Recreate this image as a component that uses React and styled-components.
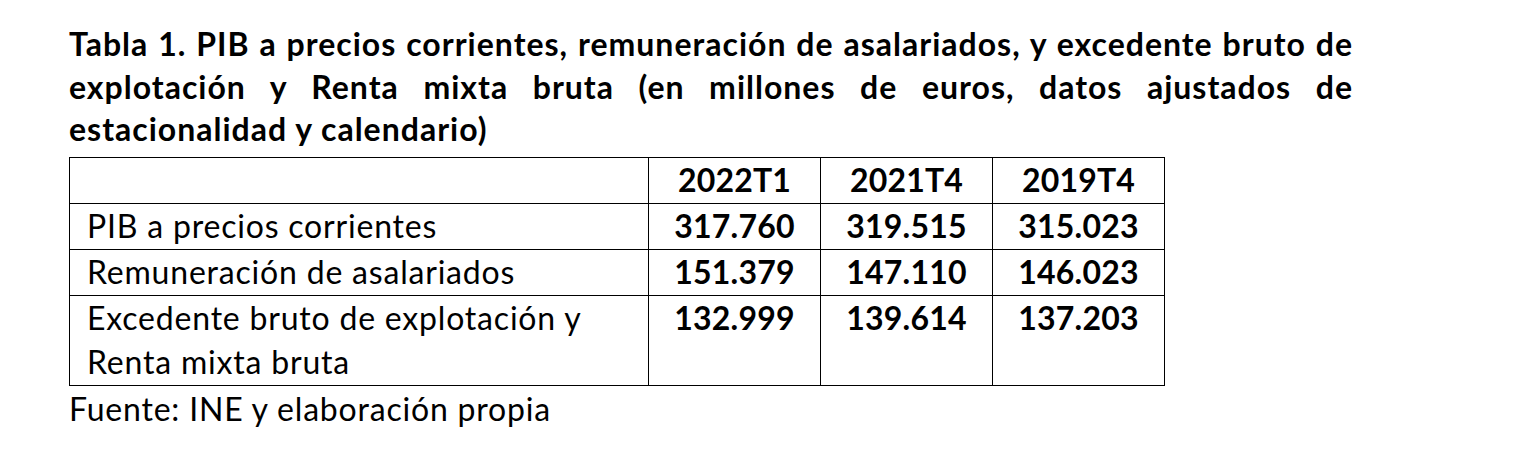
import React from "react";
import styled, { createGlobalStyle } from "styled-components";

const Global = createGlobalStyle`
  html, body { margin: 0; padding: 0; background: #fff; }
  body { font-family: Lato, "Open Sans", sans-serif; color: #000; }
`;

const Page = styled.div`
  padding: 23px 0 0 69px;
  width: 1284px;
`;

const Title = styled.h1`
  margin: 0;
  font-size: 32px;
  font-weight: 700;
  letter-spacing: 1px;
  line-height: 42.5px;
  text-align: justify;
  text-align-last: left;
`;

const Table = styled.table`
  border-collapse: collapse;
  table-layout: fixed;
  width: 1095px;
  margin-top: 6px;
`;

const Col = styled.col`
  width: ${(p) => p.$w}px;
`;

const Row = styled.tr`
  height: ${(p) => p.$h || 46}px;
`;

const Cell = styled.td`
  border: 1px solid #000;
  padding: 0 0 0 ${(p) => (p.$label ? 17 : 0)}px;
  vertical-align: top;
  text-align: ${(p) => (p.$label ? "left" : "center")};
  font-size: 32px;
  line-height: 44px;
  font-weight: ${(p) => (p.$label ? 400 : 700)};
  letter-spacing: ${(p) => (p.$label ? 0.8 : 0.2)}px;
`;

const Source = styled.p`
  margin: 0;
  font-size: 32px;
  letter-spacing: 0.8px;
  line-height: 46px;
`;

const rows = [
  { label: "PIB a precios corrientes", v: ["317.760", "319.515", "315.023"] },
  { label: "Remuneración de asalariados", v: ["151.379", "147.110", "146.023"] },
  {
    label: (
      <>
        Excedente bruto de explotación y
        <br />
        Renta mixta bruta
      </>
    ),
    v: ["132.999", "139.614", "137.203"],
    h: 90,
  },
];

export default function App() {
  return (
    <>
      <Global />
      <Page>
        <Title>
          Tabla 1. PIB a precios corrientes, remuneración de asalariados, y excedente bruto de
          explotación y Renta mixta bruta (en millones de euros, datos ajustados de
          estacionalidad y calendario)
        </Title>
        <Table>
          <colgroup>
            <Col $w={579} />
            <Col $w={172} />
            <Col $w={172} />
            <Col $w={172} />
          </colgroup>
          <tbody>
            <Row>
              <Cell $label />
              <Cell>2022T1</Cell>
              <Cell>2021T4</Cell>
              <Cell>2019T4</Cell>
            </Row>
            {rows.map((r, i) => (
              <Row key={i} $h={r.h}>
                <Cell $label>{r.label}</Cell>
                {r.v.map((x) => (
                  <Cell key={x}>{x}</Cell>
                ))}
              </Row>
            ))}
          </tbody>
        </Table>
        <Source>Fuente: INE y elaboración propia</Source>
      </Page>
    </>
  );
}
